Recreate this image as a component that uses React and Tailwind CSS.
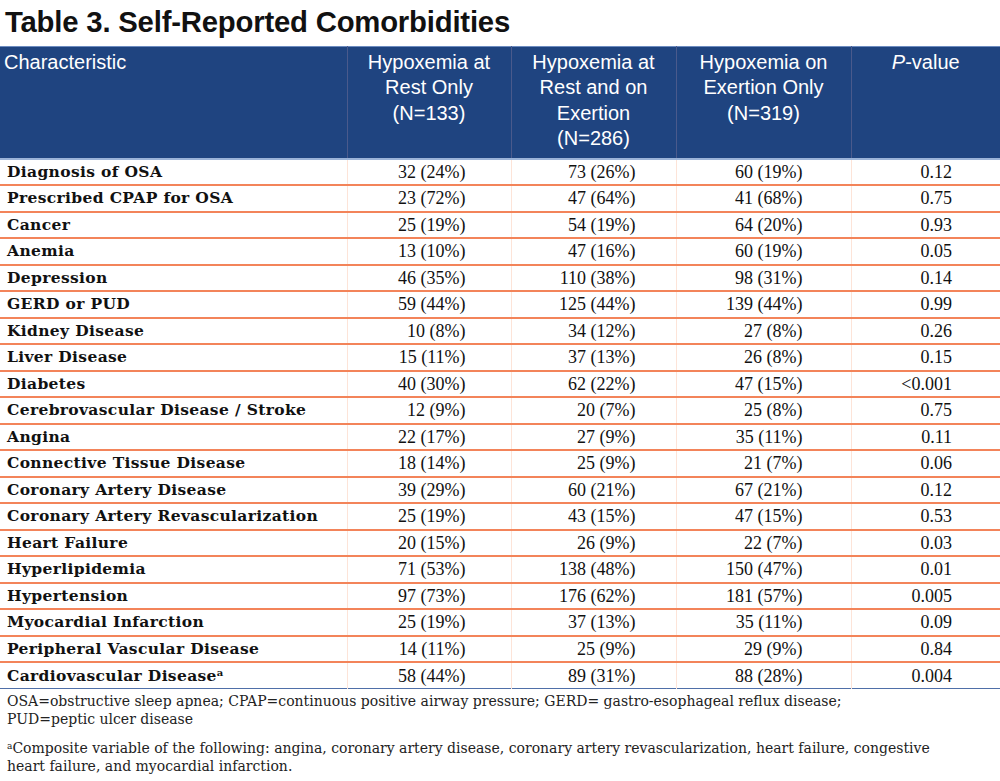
import React from "react";

const rows = [
  ["Diagnosis of OSA", "32 (24%)", "73 (26%)", "60 (19%)", "0.12"],
  ["Prescribed CPAP for OSA", "23 (72%)", "47 (64%)", "41 (68%)", "0.75"],
  ["Cancer", "25 (19%)", "54 (19%)", "64 (20%)", "0.93"],
  ["Anemia", "13 (10%)", "47 (16%)", "60 (19%)", "0.05"],
  ["Depression", "46 (35%)", "110 (38%)", "98 (31%)", "0.14"],
  ["GERD or PUD", "59 (44%)", "125 (44%)", "139 (44%)", "0.99"],
  ["Kidney Disease", "10 (8%)", "34 (12%)", "27 (8%)", "0.26"],
  ["Liver Disease", "15 (11%)", "37 (13%)", "26 (8%)", "0.15"],
  ["Diabetes", "40 (30%)", "62 (22%)", "47 (15%)", "<0.001"],
  ["Cerebrovascular Disease / Stroke", "12 (9%)", "20 (7%)", "25 (8%)", "0.75"],
  ["Angina", "22 (17%)", "27 (9%)", "35 (11%)", "0.11"],
  ["Connective Tissue Disease", "18 (14%)", "25 (9%)", "21 (7%)", "0.06"],
  ["Coronary Artery Disease", "39 (29%)", "60 (21%)", "67 (21%)", "0.12"],
  ["Coronary Artery Revascularization", "25 (19%)", "43 (15%)", "47 (15%)", "0.53"],
  ["Heart Failure", "20 (15%)", "26 (9%)", "22 (7%)", "0.03"],
  ["Hyperlipidemia", "71 (53%)", "138 (48%)", "150 (47%)", "0.01"],
  ["Hypertension", "97 (73%)", "176 (62%)", "181 (57%)", "0.005"],
  ["Myocardial Infarction", "25 (19%)", "37 (13%)", "35 (11%)", "0.09"],
  ["Peripheral Vascular Disease", "14 (11%)", "25 (9%)", "29 (9%)", "0.84"],
  ["Cardiovascular Disease", "58 (44%)", "89 (31%)", "88 (28%)", "0.004", true],
];

const serif = "font-['DejaVu_Serif','Liberation_Serif',serif]";
const val = "font-['Liberation_Serif',serif] text-[18px] leading-[20px] text-[#111] text-right";

export default function App() {
  return (
    <div className="w-[1000px] h-[781px] bg-white overflow-hidden">
      <h1 className="font-['Liberation_Sans',Arial,sans-serif] font-bold text-[29.3px] leading-[34px] text-[#111] pl-[5px] pt-[5px] h-[46px] tracking-[-0.2px]">
        Table 3. Self-Reported Comorbidities
      </h1>
      <table className="w-[1000px] border-collapse table-fixed">
        <colgroup>
          <col className="w-[347px]" />
          <col className="w-[164px]" />
          <col className="w-[165px]" />
          <col className="w-[175px]" />
          <col className="w-[149px]" />
        </colgroup>
        <thead>
          <tr className="bg-[#1f4480] text-white font-['Liberation_Sans',Arial,sans-serif] text-[20px] leading-[25.3px] border-t border-t-[#6d8cc0] border-b-2 border-b-[#9bb3d8]">
            <th className="h-[112px] align-top text-left font-normal pl-[4px] pt-[3px] border-r border-r-[#4a5a8c]">
              Characteristic
            </th>
            <th className="align-top text-center font-normal pt-[3px] border-r border-r-[#4a5a8c]">
              Hypoxemia at
              <br />
              Rest Only
              <br />
              (N=133)
            </th>
            <th className="align-top text-center font-normal pt-[3px] border-r border-r-[#4a5a8c]">
              Hypoxemia at
              <br />
              Rest and on
              <br />
              Exertion
              <br />
              (N=286)
            </th>
            <th className="align-top text-center font-normal pt-[3px] border-r border-r-[#4a5a8c]">
              Hypoxemia on
              <br />
              Exertion Only
              <br />
              (N=319)
            </th>
            <th className="align-top text-center font-normal pt-[3px]">
              <i>P</i>-value
            </th>
          </tr>
        </thead>
        <tbody>
          {rows.map((r, i) => (
            <tr
              key={i}
              className={
                "h-[26.5px] " +
                (i === rows.length - 1
                  ? "border-b border-b-[#4f6fa8]"
                  : "border-b-2 border-b-[#f3845a]")
              }
            >
              <td className={`${serif} font-bold text-[15.5px] leading-[20px] tracking-[0.35px] text-[#111] pl-[7px] border-r border-r-[#fde4d8] whitespace-nowrap`}>
                {r[0]}
                {r[5] ? <sup className="text-[10px] leading-[0]">a</sup> : null}
              </td>
              <td className={`${val} pr-[45px] border-r border-r-[#fde4d8]`}>{r[1]}</td>
              <td className={`${val} pr-[40px] border-r border-r-[#fde4d8]`}>{r[2]}</td>
              <td className={`${val} pr-[48px] border-r border-r-[#fde4d8]`}>{r[3]}</td>
              <td className={`${val} pr-[48px]`}>{r[4]}</td>
            </tr>
          ))}
        </tbody>
      </table>
      <div className={`${serif} text-[14px] leading-[17.5px] text-[#222] pl-[7px] pt-[4px]`}>
        <p>
          OSA=obstructive sleep apnea; CPAP=continuous positive airway pressure; GERD= gastro-esophageal reflux disease;
          <br />
          PUD=peptic ulcer disease
        </p>
        <p className="mt-[12px]">
          <sup className="text-[9px]">a</sup>Composite variable of the following: angina, coronary artery disease, coronary artery revascularization, heart failure, congestive
          <br />
          heart failure, and myocardial infarction.
        </p>
      </div>
    </div>
  );
}
